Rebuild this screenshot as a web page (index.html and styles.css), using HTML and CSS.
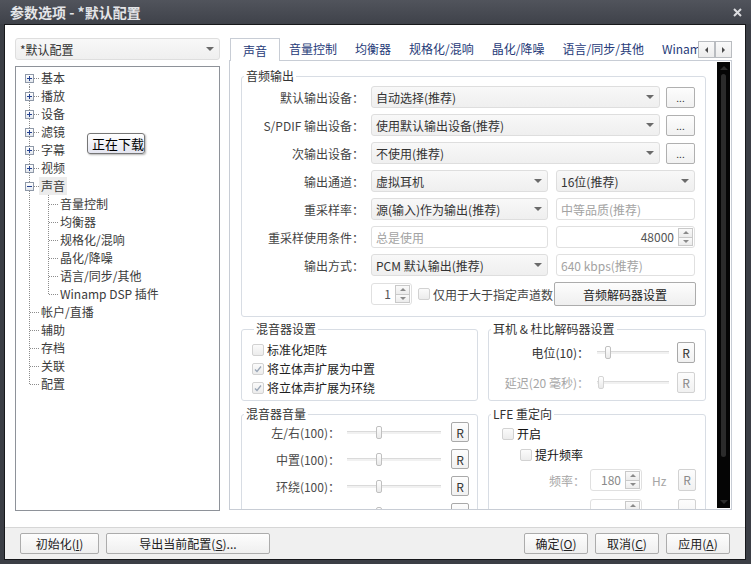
FILE: index.html
```html
<!DOCTYPE html>
<html lang="zh-CN">
  <head>
    <meta charset="UTF-8" />
    <title>参数选项 - *默认配置</title>
    <link rel="stylesheet" href="styles.css">
  </head>
  <body>
    <div class="window">
      <div class="titlebar">
        <span class="title">参数选项 - *默认配置</span>
        <svg class="close" width="9" height="9" viewBox="0 0 9 9">
          <path d="M1 1L8 8M8 1L1 8" stroke="#dcdde0" stroke-width="2" />
        </svg>
      </div>

      <div class="client">
        <div class="main">
          <!-- left: profile + tree -->
          <div class="side">
            <div class="combo profile"><span>*默认配置</span><i class="arrow"></i></div>
            <div class="tree">
              <div class="node"><span class="g f"><b class="exp"><svg width="7" height="7"><path d="M1 3.5h5M3.5 1v5" stroke="#23408f"/></svg></b></span><span class="lbl">基本</span></div>
              <div class="node"><span class="g t"><b class="exp"><svg width="7" height="7"><path d="M1 3.5h5M3.5 1v5" stroke="#23408f"/></svg></b></span><span class="lbl">播放</span></div>
              <div class="node"><span class="g t"><b class="exp"><svg width="7" height="7"><path d="M1 3.5h5M3.5 1v5" stroke="#23408f"/></svg></b></span><span class="lbl">设备</span></div>
              <div class="node"><span class="g t"><b class="exp"><svg width="7" height="7"><path d="M1 3.5h5M3.5 1v5" stroke="#23408f"/></svg></b></span><span class="lbl">滤镜</span></div>
              <div class="node"><span class="g t"><b class="exp"><svg width="7" height="7"><path d="M1 3.5h5M3.5 1v5" stroke="#23408f"/></svg></b></span><span class="lbl">字幕</span></div>
              <div class="node"><span class="g t"><b class="exp"><svg width="7" height="7"><path d="M1 3.5h5M3.5 1v5" stroke="#23408f"/></svg></b></span><span class="lbl">视频</span></div>
              <div class="node"><span class="g t"><b class="exp"><svg width="7" height="7"><path d="M1 3.5h5" stroke="#23408f"/></svg></b></span><span class="lbl selected">声音</span></div>
              <div class="node"><span class="g v"></span><span class="g2 t"></span><span class="lbl">音量控制</span></div>
              <div class="node"><span class="g v"></span><span class="g2 t"></span><span class="lbl">均衡器</span></div>
              <div class="node"><span class="g v"></span><span class="g2 t"></span><span class="lbl">规格化/混响</span></div>
              <div class="node"><span class="g v"></span><span class="g2 t"></span><span class="lbl">晶化/降噪</span></div>
              <div class="node"><span class="g v"></span><span class="g2 t"></span><span class="lbl">语言/同步/其他</span></div>
              <div class="node"><span class="g v"></span><span class="g2 l"></span><span class="lbl">Winamp DSP 插件</span></div>
              <div class="node"><span class="g t"></span><span class="lbl">帐户/直播</span></div>
              <div class="node"><span class="g t"></span><span class="lbl">辅助</span></div>
              <div class="node"><span class="g t"></span><span class="lbl">存档</span></div>
              <div class="node"><span class="g t"></span><span class="lbl">关联</span></div>
              <div class="node"><span class="g l"></span><span class="lbl">配置</span></div>
            </div>
            <div class="tooltip">正在下载</div>
          </div>

          <!-- right: tabs + page -->
          <div class="settings">
            <div class="tabs">
              <div class="tab-list">
                <span class="tab active">声音</span>
                <span class="tab">音量控制</span>
                <span class="tab">均衡器</span>
                <span class="tab">规格化/混响</span>
                <span class="tab">晶化/降噪</span>
                <span class="tab">语言/同步/其他</span>
                <span class="tab">Winamp DSP 插件</span>
              </div>
              <div class="tab-scroll">
                <span class="sbtn"><i class="tri-l"></i></span>
                <span class="sbtn"><i class="tri-r"></i></span>
              </div>
            </div>

            <div class="panel">
              <div class="page">
                <fieldset class="group">
                  <legend>音频输出</legend>
                  <div class="row">
                    <span class="rl">默认输出设备<span class="colon">：</span></span>
                    <div class="combo w289"><span>自动选择(推荐)</span><i class="arrow"></i></div>
                    <span class="dots">...</span>
                  </div>
                  <div class="row">
                    <span class="rl">S/PDIF 输出设备<span class="colon">：</span></span>
                    <div class="combo w289"><span>使用默认输出设备(推荐)</span><i class="arrow"></i></div>
                    <span class="dots">...</span>
                  </div>
                  <div class="row">
                    <span class="rl">次输出设备<span class="colon">：</span></span>
                    <div class="combo w289"><span>不使用(推荐)</span><i class="arrow"></i></div>
                    <span class="dots">...</span>
                  </div>
                  <div class="row">
                    <span class="rl">输出通道<span class="colon">：</span></span>
                    <div class="combo w177"><span>虚拟耳机</span><i class="arrow"></i></div>
                    <div class="combo w139"><span>16位(推荐)</span><i class="arrow"></i></div>
                  </div>
                  <div class="row">
                    <span class="rl">重采样率<span class="colon">：</span></span>
                    <div class="combo w177"><span>源(输入)作为输出(推荐)</span><i class="arrow"></i></div>
                    <div class="field w139">中等品质(推荐)</div>
                  </div>
                  <div class="row">
                    <span class="rl">重采样使用条件<span class="colon">：</span></span>
                    <div class="field w177">总是使用</div>
                    <div class="spin w139">
                      <span class="val">48000</span>
                      <span class="spin-btns"><i class="up"></i><i class="down"></i></span>
                    </div>
                  </div>
                  <div class="row">
                    <span class="rl">输出方式<span class="colon">：</span></span>
                    <div class="combo w177"><span>PCM 默认输出(推荐)</span><i class="arrow"></i></div>
                    <div class="field w139">640 kbps(推荐)</div>
                  </div>
                  <div class="row last">
                    <span class="rl"></span>
                    <div class="spin w41">
                      <span class="val">1</span>
                      <span class="spin-btns"><i class="up"></i><i class="down"></i></span>
                    </div>
                    <span class="box"></span>
                    <span class="clip">仅用于大于指定声道数</span>
                    <span class="btn decoder">音频解码器设置</span>
                  </div>
                </fieldset>

                <div class="groups">
                  <fieldset class="group mix">
                    <legend>混音器设置</legend>
                    <div class="chk"><span class="box"></span>标准化矩阵</div>
                    <div class="chk"><span class="box on"><svg width="10" height="10"><path d="M2 5.5l2 2 4-5" fill="none" stroke="#9aa6b6" stroke-width="1.3"/></svg></span>将立体声扩展为中置</div>
                    <div class="chk"><span class="box on"><svg width="10" height="10"><path d="M2 5.5l2 2 4-5" fill="none" stroke="#9aa6b6" stroke-width="1.3"/></svg></span>将立体声扩展为环绕</div>
                  </fieldset>

                  <fieldset class="group dolby">
                    <legend>耳机 &amp; 杜比解码器设置</legend>
                    <div class="srow">
                      <span class="sl">电位(10)<span class="colon">：</span></span>
                      <div class="slider w72"><i class="thumb" style="margin-left: 8px"></i></div>
                      <span class="rbtn">R</span>
                    </div>
                    <div class="srow off">
                      <span class="sl">延迟(20 毫秒)<span class="colon">：</span></span>
                      <div class="slider w72"><i class="thumb" style="margin-left: 1px"></i></div>
                      <span class="rbtn">R</span>
                    </div>
                  </fieldset>

                  <fieldset class="group volume">
                    <legend>混音器音量</legend>
                    <div class="srow">
                      <span class="vl">左/右(100)<span class="colon">：</span></span>
                      <div class="slider w94"><i class="thumb" style="margin-left: 29px"></i></div>
                      <span class="rbtn">R</span>
                    </div>
                    <div class="srow">
                      <span class="vl">中置(100)<span class="colon">：</span></span>
                      <div class="slider w94"><i class="thumb" style="margin-left: 29px"></i></div>
                      <span class="rbtn">R</span>
                    </div>
                    <div class="srow">
                      <span class="vl">环绕(100)<span class="colon">：</span></span>
                      <div class="slider w94"><i class="thumb" style="margin-left: 29px"></i></div>
                      <span class="rbtn">R</span>
                    </div>
                    <div class="srow">
                      <span class="vl"></span>
                      <div class="slider w94"><i class="thumb" style="margin-left: 29px"></i></div>
                      <span class="rbtn"></span>
                    </div>
                  </fieldset>

                  <fieldset class="group lfe">
                    <legend>LFE 重定向</legend>
                    <div class="chk lvl1"><span class="box"></span>开启</div>
                    <div class="chk lvl2"><span class="box"></span>提升频率</div>
                    <div class="srow off freq">
                      <span class="fl">频率<span class="colon">：</span></span>
                      <div class="spin w52">
                        <span class="val">180</span>
                        <span class="spin-btns"><i class="up"></i><i class="down"></i></span>
                      </div>
                      <span class="unit">Hz</span>
                      <span class="rbtn">R</span>
                    </div>
                    <div class="srow off freq">
                      <span class="fl"></span>
                      <div class="spin w52">
                        <span class="val"></span>
                        <span class="spin-btns"><i class="up"></i><i class="down"></i></span>
                      </div>
                      <span class="unit"></span>
                      <span class="rbtn"></span>
                    </div>
                  </fieldset>
                </div>
              </div>

              <div class="scrollbar">
                <i class="sb-up"></i>
                <span class="sb-thumb"></span>
                <i class="sb-down"></i>
              </div>
            </div>
          </div>
        </div>

        <div class="footer">
          <span class="btn b-init">初始化(<u>I</u>)</span>
          <span class="btn b-export">导出当前配置(<u>S</u>)...</span>
          <span class="btn b-ok">确定(<u>O</u>)</span>
          <span class="btn b-act">取消(<u>C</u>)</span>
          <span class="btn b-act">应用(<u>A</u>)</span>
        </div>
      </div>
    </div>
  </body>
</html>
```

FILE: styles.css
```css
* {
  box-sizing: border-box;
}
html,
body {
  margin: 0;
}
body {
  width: 751px;
  height: 564px;
  overflow: hidden;
  font-family: "Noto Sans CJK SC", "Microsoft YaHei", sans-serif;
  font-size: 12px;
  color: #333;
}
.window {
  width: 751px;
  height: 564px;
  display: flex;
  flex-direction: column;
  padding: 0 5px 4px 4px;
  background: #3b3e45;
}
.titlebar {
  height: 24px;
  flex: none;
  margin: 0 -5px 0 -4px;
  padding: 0 9px 0 10px;
  display: flex;
  align-items: center;
  justify-content: space-between;
  background: linear-gradient(#51545c, #3f424a);
}
.title {
  color: #e4e5e8;
  font-size: 14px;
  font-weight: bold;
  line-height: 24px;
}
.client {
  flex: 1;
  min-height: 0;
  display: flex;
  flex-direction: column;
  background: #fff;
  border: 1px solid #17181b;
}
.main {
  flex: 1;
  min-height: 0;
  display: flex;
  gap: 9px;
  padding: 13px 11px 16px 10px;
}
.colon {
  font-family: "Noto Sans CJK TC", "Noto Sans CJK SC", sans-serif;
}

/* left column */
.side {
  position: relative;
  width: 205px;
  display: flex;
  flex-direction: column;
  gap: 6px;
}
.combo {
  height: 22px;
  flex: none;
  display: flex;
  align-items: center;
  justify-content: space-between;
  padding: 0 5px 0 4px;
  border: 1px solid #dedede;
  border-radius: 3px;
  background: linear-gradient(#f8f8f8, #efefef);
  color: #333;
  white-space: nowrap;
}
.arrow {
  width: 0;
  height: 0;
  border-left: 4px solid transparent;
  border-right: 4px solid transparent;
  border-top: 4px solid #6a6a6a;
}
.tree {
  flex: 1;
  border: 1px solid #8e9299;
  background: #fff;
  padding: 2px 0 0 9px;
  color: #3a3a3a;
}
.node {
  height: 18px;
  display: flex;
  align-items: center;
}
.g,
.g2 {
  height: 18px;
  display: flex;
  align-items: center;
  flex: none;
  background-repeat: no-repeat;
}
.g {
  width: 15px;
}
.g2 {
  width: 19px;
}
.g.v,
.g.t {
  background-image: repeating-linear-gradient(to bottom, #8c8c8c 0 1px, transparent 1px 2px);
  background-size: 1px 18px;
  background-position: 4px 0;
}
.g.t,
.g.l,
.g.f {
  background-image: repeating-linear-gradient(to bottom, #8c8c8c 0 1px, transparent 1px 2px),
    repeating-linear-gradient(to right, #8c8c8c 0 1px, transparent 1px 2px);
  background-size: 1px 18px, 10px 1px;
  background-position: 4px 0, 5px 9px;
}
.g.l {
  background-size: 1px 9px, 10px 1px;
}
.g.f {
  background-size: 1px 9px, 10px 1px;
  background-position: 4px 9px, 5px 9px;
}
.g2.t,
.g2.l {
  background-image: repeating-linear-gradient(to bottom, #8c8c8c 0 1px, transparent 1px 2px),
    repeating-linear-gradient(to right, #8c8c8c 0 1px, transparent 1px 2px);
  background-size: 1px 18px, 10px 1px;
  background-position: 8px 0, 9px 9px;
}
.g2.l {
  background-size: 1px 9px, 10px 1px;
}
.exp {
  width: 9px;
  height: 9px;
  border: 1px solid #8f99a8;
  background: linear-gradient(#ffffff, #e3e7ee);
  display: flex;
  align-items: center;
  justify-content: center;
}
.exp svg {
  display: block;
}
.lbl {
  margin-left: -1px;
  padding: 0 2px;
  line-height: 18px;
  white-space: nowrap;
}
.lbl.selected {
  background: #ececec;
}
.tooltip {
  position: absolute;
  left: 72px;
  top: 95px;
  width: 58px;
  height: 21px;
  border: 1px solid #767676;
  border-radius: 3px;
  background: linear-gradient(#ffffff, #e4e5f0);
  box-shadow: 1px 1px 2px rgba(0, 0, 0, 0.3);
  color: #000;
  font-size: 13px;
  line-height: 19px;
  padding-left: 4px;
}

/* right column */
.settings {
  width: 503px;
  min-height: 0;
  display: flex;
  flex-direction: column;
}
.tabs {
  height: 23px;
  flex: none;
  display: flex;
}
.tab-list {
  flex: 1;
  display: flex;
  overflow: hidden;
  padding-left: 1px;
}
.tab {
  padding: 0 9px;
  line-height: 21px;
  color: #263a78;
  white-space: nowrap;
}
.tab.active {
  position: relative;
  z-index: 1;
  padding: 1px 12px 0;
  border: 1px solid #c8cdd5;
  border-bottom: none;
  background: #fff;
  height: 23px;
}
.tab-scroll {
  display: flex;
  margin-top: 3px;
  height: 17px;
}
.sbtn {
  width: 17px;
  height: 17px;
  border: 1px solid #b9bcc0;
  background: linear-gradient(#fafafa, #ececec);
  display: flex;
  align-items: center;
  justify-content: center;
}
.tri-l {
  border-top: 3px solid transparent;
  border-bottom: 3px solid transparent;
  border-right: 3px solid #4a4a4a;
}
.tri-r {
  border-top: 3px solid transparent;
  border-bottom: 3px solid transparent;
  border-left: 3px solid #4a4a4a;
}
.panel {
  flex: 1;
  min-height: 0;
  display: flex;
  margin-top: -1px;
  margin-bottom: 1px;
  border: 1px solid #c8cdd5;
  background: #fff;
}
.page {
  flex: 1;
  overflow: hidden;
  padding: 8px 11px 0 11px;
}
.scrollbar {
  width: 13px;
  margin: 1px 1px 1px 0;
  background: #050505;
  display: flex;
  flex-direction: column;
  align-items: center;
}
.sb-up {
  margin-top: 4px;
  border-left: 4px solid transparent;
  border-right: 4px solid transparent;
  border-bottom: 4px solid #2c2c2c;
}
.sb-thumb {
  width: 5px;
  height: 383px;
  margin-top: 4px;
  border-radius: 3px;
  background: #2b2b2b;
}
.sb-down {
  margin-top: auto;
  margin-bottom: 4px;
  border-left: 4px solid transparent;
  border-right: 4px solid transparent;
  border-top: 4px solid #2c2c2c;
}

/* groups */
.group {
  margin: 0;
  min-width: 0;
  border: 1px solid #d8dde4;
  border-radius: 3px;
  padding: 3px 9px 10px 0;
}
.group legend {
  margin-left: 2px;
  padding: 0 2px;
  line-height: 14px;
  color: #333;
}
.row {
  height: 22px;
  display: flex;
  align-items: center;
  margin-bottom: 6px;
}
.row.last {
  height: 24px;
  margin-bottom: 0;
}
.rl {
  width: 122px;
  margin-right: 7px;
  text-align: right;
  color: #444;
  white-space: nowrap;
  flex: none;
}
.w289 {
  width: 289px;
}
.w177 {
  width: 177px;
}
.w139 {
  width: 139px;
  margin-left: 8px;
}
.w41 {
  width: 41px;
}
.w52 {
  width: 52px;
}
.w72 {
  width: 72px;
}
.w94 {
  width: 94px;
}
.dots {
  width: 29px;
  height: 21px;
  margin-left: 6px;
  border: 1px solid #b0b0b0;
  border-radius: 2px;
  background: linear-gradient(#fdfdfd, #f1f1f1);
  text-align: center;
  font-size: 10px;
  line-height: 20px;
  color: #333;
}
.field {
  height: 22px;
  display: flex;
  align-items: center;
  padding: 0 4px;
  border: 1px solid #e0e0e0;
  border-radius: 3px;
  background: #fff;
  color: #a3a3a3;
  white-space: nowrap;
}
.spin {
  height: 22px;
  display: flex;
  padding: 1px;
  border: 1px solid #e0e0e0;
  border-radius: 3px;
  background: #fff;
  flex: none;
}
.spin .val {
  flex: 1;
  text-align: right;
  padding-right: 4px;
  line-height: 18px;
  color: #555;
}
.spin-btns {
  width: 15px;
  display: flex;
  flex-direction: column;
}
.spin-btns i {
  flex: 1;
  border: 1px solid #c9c9c9;
  background: linear-gradient(#fafafa, #ececec);
  display: flex;
  align-items: center;
  justify-content: center;
}
.spin-btns i + i {
  border-top: none;
}
.spin-btns .up::after {
  content: "";
  border-left: 3px solid transparent;
  border-right: 3px solid transparent;
  border-bottom: 3px solid #8a8a8a;
}
.spin-btns .down::after {
  content: "";
  border-left: 3px solid transparent;
  border-right: 3px solid transparent;
  border-top: 3px solid #8a8a8a;
}
.box {
  width: 12px;
  height: 12px;
  flex: none;
  border: 1px solid #d2d2d2;
  border-radius: 2px;
  background: linear-gradient(#fbfbfb, #ececec);
  display: flex;
  align-items: center;
  justify-content: center;
}
.row .box {
  margin-left: 6px;
  margin-right: 3px;
}
.clip {
  flex: 1;
  min-width: 0;
  overflow: hidden;
  white-space: nowrap;
  color: #444;
}
.btn {
  display: flex;
  align-items: center;
  justify-content: center;
  border: 1px solid #acacac;
  border-radius: 2px;
  background: linear-gradient(#fdfdfd, #efefef);
  color: #222;
  white-space: nowrap;
}
.decoder {
  width: 142px;
  height: 24px;
  flex: none;
}
.groups {
  display: grid;
  grid-template-columns: 237px 218px;
  column-gap: 10px;
  row-gap: 6px;
  margin-top: 5px;
}
.groups .group {
  padding: 0;
}
.groups .mix {
  padding: 4px 0 3px 10px;
}
.chk {
  height: 19px;
  display: flex;
  align-items: center;
  gap: 3px;
  color: #1e1e1e;
  white-space: nowrap;
}
.srow {
  display: flex;
  align-items: center;
  height: 21px;
  white-space: nowrap;
}
.dolby .srow:first-of-type {
  margin-top: 6px;
}
.dolby .srow + .srow {
  margin-top: 9px;
}
.sl {
  width: 100px;
  text-align: right;
  color: #333;
}
.dolby .slider {
  margin-left: 8px;
}
.rbtn {
  width: 18px;
  height: 21px;
  margin-left: 8px;
  border: 1px solid #a9a9a9;
  border-radius: 2px;
  background: linear-gradient(#fdfdfd, #f1f1f1);
  text-align: center;
  line-height: 19px;
  color: #333;
  flex: none;
}
.srow.off .sl,
.srow.off .fl,
.srow.off .unit {
  color: #a6a6a6;
}
.srow.off .rbtn {
  border-color: #d2d2d2;
  color: #8a8a8a;
}
.srow.off .val {
  color: #8a8a8a;
}
.slider {
  height: 16px;
  display: flex;
  align-items: center;
  background: linear-gradient(#dadada 0 1px, #f1f1f1 1px 3px) no-repeat 0 50% / 100% 3px;
  flex: none;
}
.thumb {
  width: 6px;
  height: 13px;
  border: 1px solid #c0c0c0;
  border-radius: 2px;
  background: linear-gradient(#ffffff, #e9e9e9);
}
.srow.off .thumb {
  border-color: #d4d4d4;
}
.volume .srow {
  height: 20px;
  margin-top: 7px;
}
.volume .srow:first-of-type {
  margin-top: 1px;
}
.vl {
  width: 98px;
  flex: none;
  text-align: right;
  color: #4a4a4a;
}
.volume .slider {
  margin-left: 7px;
}
.volume .rbtn {
  height: 20px;
  margin-left: 10px;
}
.lfe .lvl1 {
  margin-top: 3px;
  margin-left: 13px;
}
.lfe .lvl2 {
  margin-top: 2px;
  margin-left: 31px;
}
.lfe .chk {
  color: #111;
}
.freq {
  height: 22px;
  margin-top: 5px;
}
.freq + .freq {
  margin-top: 8px;
}
.fl {
  width: 96px;
  flex: none;
  text-align: right;
}
.freq .spin {
  margin-left: 5px;
}
.unit {
  width: 26px;
  flex: none;
  margin-left: 10px;
}
.freq .rbtn {
  height: 22px;
  margin-left: 0;
}

/* footer */
.footer {
  height: 32px;
  flex: none;
  display: flex;
  gap: 7px;
  padding: 5px 15px 0;
  border-top: 1px solid #d6d6d6;
  background: #f0f0f0;
}
.footer .btn {
  height: 21px;
}
.b-init {
  width: 79px;
}
.b-export {
  width: 164px;
}
.b-ok {
  width: 64px;
  margin-left: auto;
}
.b-act {
  width: 64px;
}
```
